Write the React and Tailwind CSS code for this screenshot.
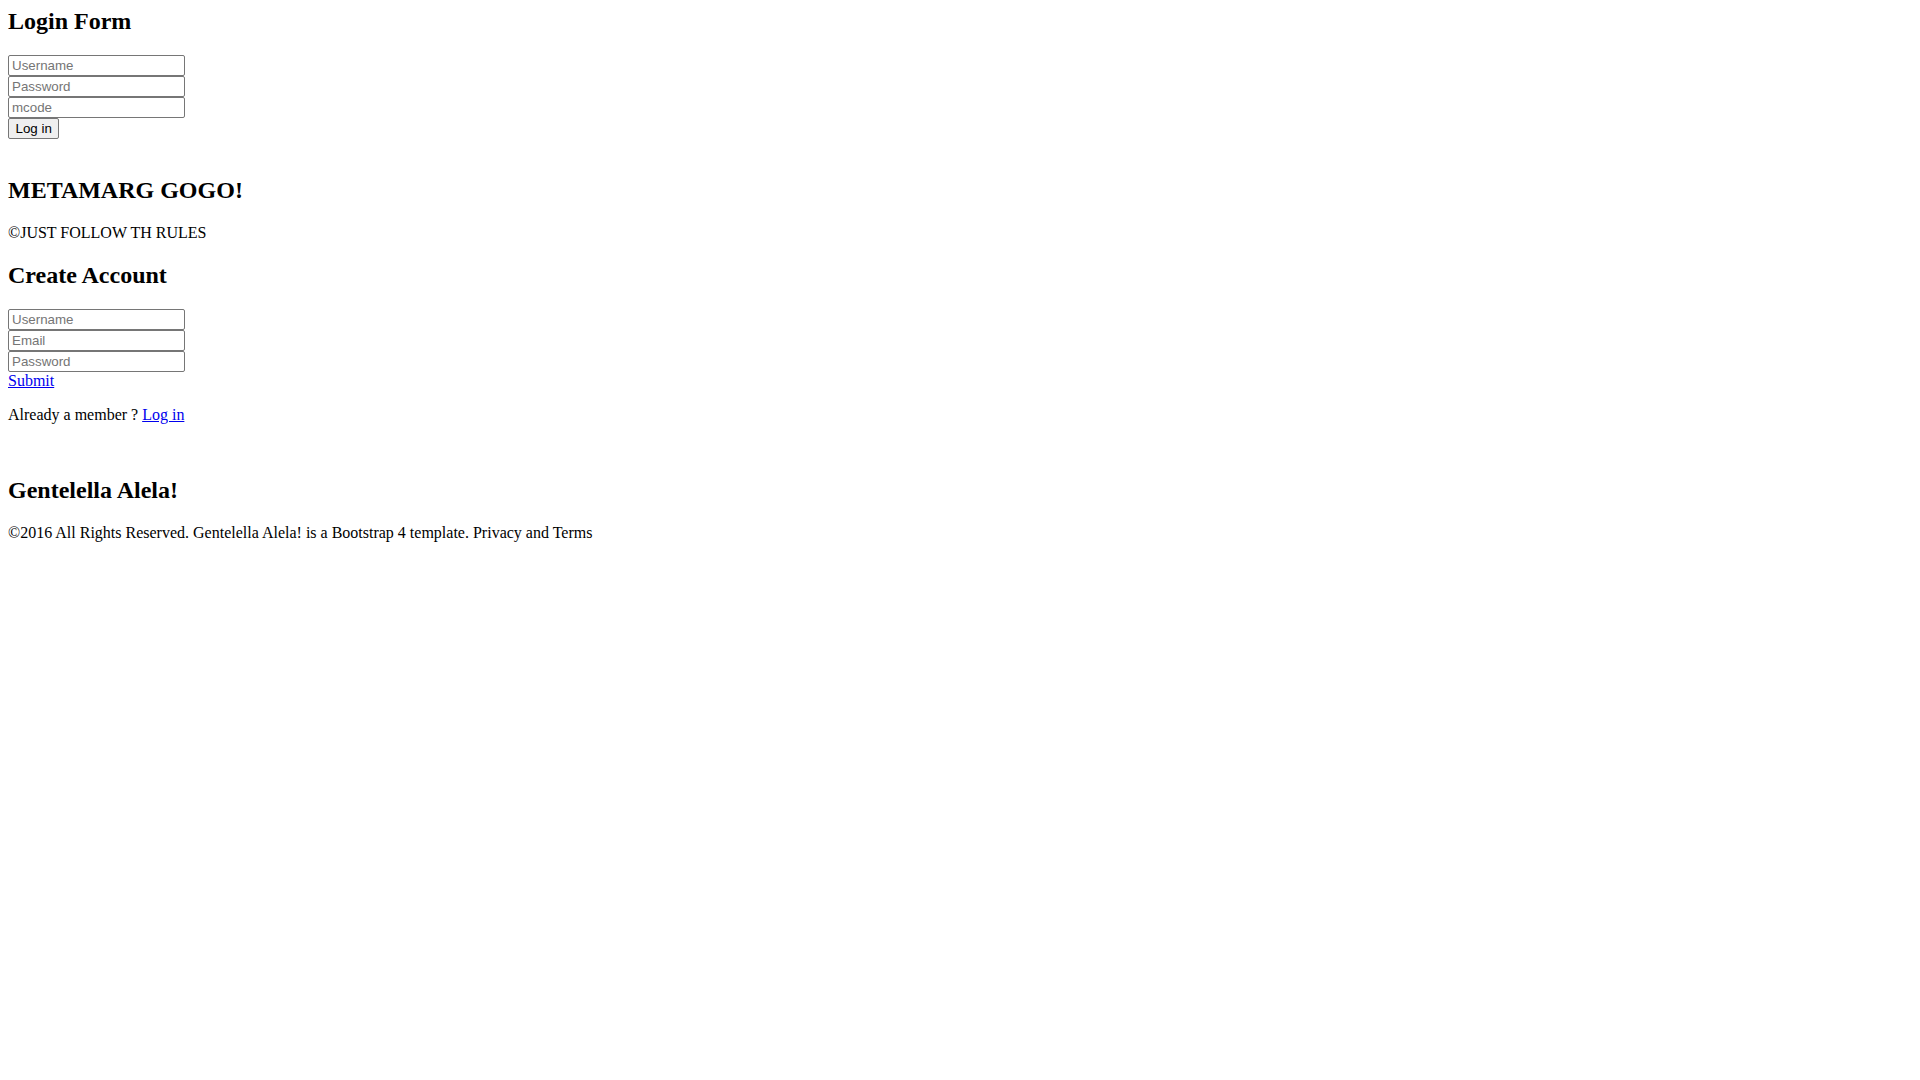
import React from 'react';

function Field({ placeholder, type = 'text' }) {
  return (
    <div className="h-[21px]">
      <input
        type={type}
        placeholder={placeholder}
        className="block w-[177px] h-[21px] border border-[#767676] rounded-[2px] px-[3px] py-[1px] text-[13.333px] leading-[normal] text-black bg-white placeholder:text-[#757575] [font-family:'Liberation_Sans',Arial,sans-serif]"
      />
    </div>
  );
}

export default function App() {
  return (
    <div className="min-h-screen bg-white text-black p-2 text-[16px] leading-[normal] [font-family:'Liberation_Serif','Times_New_Roman',serif]">
      <section>
        <form onSubmit={(e) => e.preventDefault()}>
          <h2 className="text-[24px] font-bold mb-[19.92px]">Login Form</h2>
          <Field placeholder="Username" />
          <Field placeholder="Password" type="password" />
          <Field placeholder="mcode" />
          <div className="h-[21px]">
            <button
              type="submit"
              className="block h-[21px] px-[6.5px] border border-[#767676] rounded-[2px] bg-[#efefef] text-[13.333px] leading-[normal] [font-family:'Liberation_Sans',Arial,sans-serif]"
            >
              Log in
            </button>
          </div>

          <h2 className="mt-[38px] text-[24px] font-bold">METAMARG GOGO!</h2>
          <p className="mt-[19.92px]">©JUST FOLLOW TH RULES</p>
        </form>
      </section>

      <section>
        <form onSubmit={(e) => e.preventDefault()}>
          <h2 className="mt-[19.92px] text-[24px] font-bold mb-[19.92px]">Create Account</h2>
          <Field placeholder="Username" />
          <Field placeholder="Email" type="email" />
          <Field placeholder="Password" type="password" />
          <div>
            <a href="#" className="text-[#0000ee] underline">Submit</a>
          </div>
          <p className="mt-[16px]">
            Already a member ? <a href="#" className="text-[#0000ee] underline">Log in</a>
          </p>

          <h2 className="mt-[53px] text-[24px] font-bold">Gentelella Alela!</h2>
          <p className="mt-[19.92px]">
            ©2016 All Rights Reserved. Gentelella Alela! is a Bootstrap 4 template. Privacy and Terms
          </p>
        </form>
      </section>
    </div>
  );
}
